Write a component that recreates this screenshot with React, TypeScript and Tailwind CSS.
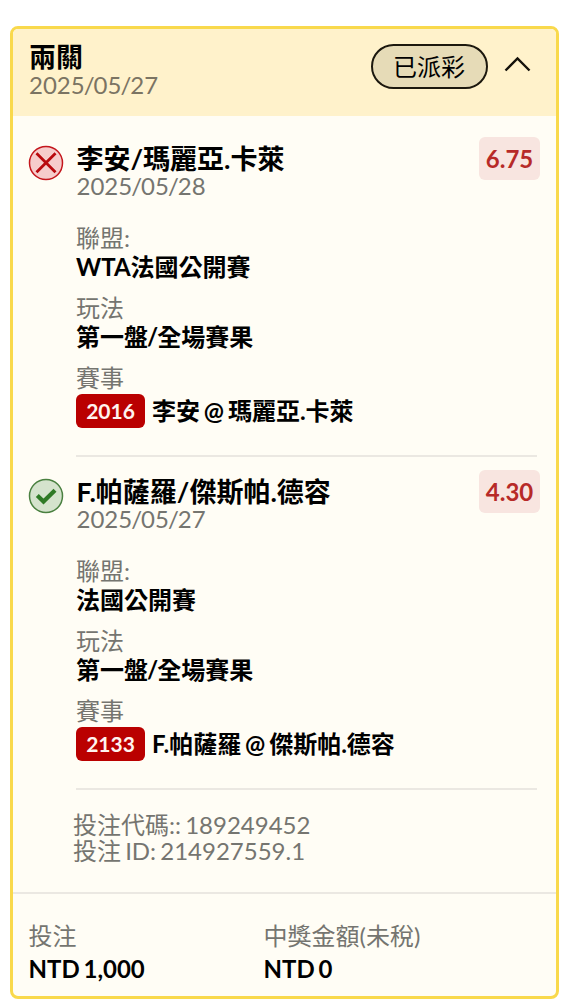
import React from 'react';

interface Leg {
    won: boolean;
    name: string;
    date: string;
    odds: string;
    league: string;
    market: string;
    code: string;
    match: string;
}

const LEGS: Leg[] = [
    {
        won: false,
        name: '李安/瑪麗亞.卡萊',
        date: '2025/05/28',
        odds: '6.75',
        league: 'WTA法國公開賽',
        market: '第一盤/全場賽果',
        code: '2016',
        match: '李安 @ 瑪麗亞.卡萊',
    },
    {
        won: true,
        name: 'F.帕薩羅/傑斯帕.德容',
        date: '2025/05/27',
        odds: '4.30',
        league: '法國公開賽',
        market: '第一盤/全場賽果',
        code: '2133',
        match: 'F.帕薩羅 @ 傑斯帕.德容',
    },
];

function StatusIcon({ won }: { won: boolean }) {
    return won ? (
        <svg className="size-[36px] shrink-0" viewBox="0 0 36 36" fill="none">
            <circle cx="18" cy="18" r="16.5" fill="#d5e3cd" stroke="#4a8040" strokeWidth="1.5" />
            <path d="M9.3 17.6l6.2 6L27 12.2" stroke="#2f7a26" strokeWidth="4.2" />
        </svg>
    ) : (
        <svg className="size-[36px] shrink-0" viewBox="0 0 36 36" fill="none">
            <circle cx="18" cy="18" r="16.5" fill="#f6cccb" stroke="#c4161c" strokeWidth="1.5" />
            <path d="M8.5 8.2l19 19M27.5 8.2l-19 19" stroke="#b90a0e" strokeWidth="2.8" />
        </svg>
    );
}

// Tightens the space around each slash
function Slashed({ text }: { text: string }) {
    return (
        <>
            {text.split('/').map((part, i) => (
                <React.Fragment key={i}>
                    {i > 0 && <span className="-mx-px">/</span>}
                    {part}
                </React.Fragment>
            ))}
        </>
    );
}

function Field({ label, value }: { label: string; value: string }) {
    return (
        <div className="mb-[14px]">
            <div className="mb-0.5 leading-[26px] text-[#757570]">{label}</div>
            <div className="font-bold leading-7">
                <Slashed text={value} />
            </div>
        </div>
    );
}

function LegRow({ leg }: { leg: Leg }) {
    return (
        <div className="flex h-[333px] pl-[14.5px] pt-[21px]">
            <StatusIcon won={leg.won} />
            <div className="ml-[12.5px] mr-[19px] flex-1 border-b-2 border-[#ebe8e2]">
                <div className="flex justify-between">
                    <div className="mb-[26px] pl-[0.5px]">
                        <div className="text-[27px] font-bold leading-7">{leg.name}</div>
                        <div className="leading-[26px] text-[#757570]">
                            <Slashed text={leg.date} />
                        </div>
                    </div>
                    <div className="-mr-[3px] -mt-2 flex h-[43px] w-[61px] items-center justify-center rounded-md bg-[#f8e5e0] font-bold text-[#b72a28]">
                        {leg.odds}
                    </div>
                </div>
                <Field label="聯盟:" value={leg.league} />
                <Field label="玩法" value={leg.market} />
                <div className="leading-[26px] text-[#757570]">賽事</div>
                <div className="mt-[3px] flex items-center">
                    <span className="mr-[7px] flex h-[34px] w-[69px] items-center justify-center rounded-md bg-[#ba0000] text-[21px] font-bold text-[#fff3ef]">
                        {leg.code}
                    </span>
                    <span className="font-bold leading-7 [word-spacing:-2px]">{leg.match}</span>
                </div>
            </div>
        </div>
    );
}

export default function App() {
    return (
        <div className="h-[1000px] bg-white pl-[10px] pt-[26px] font-[Lato,'Noto_Sans_CJK_TC',sans-serif] text-2xl text-black">
            <div className="flex h-[973px] w-[549px] flex-col overflow-hidden rounded-lg border-[3.5px] border-[#f9d94c] bg-[#fffdf5]">
                {/* Header */}
                <div className="flex h-[87px] shrink-0 items-start bg-[#fff2cb] pl-4 pt-[15px]">
                    <div className="-mt-px flex-1 leading-7">
                        <div className="text-[27px] font-bold">兩關</div>
                        <div className="text-[#7b7463]">
                            <Slashed text="2025/05/27" />
                        </div>
                    </div>
                    <div className="flex h-[45px] w-[117px] items-center justify-center rounded-full border-2 border-[#1c180e] bg-[#e6dbb7]">
                        已派彩
                    </div>
                    <svg className="ml-4 mr-[25.5px] mt-3 h-4 w-[27px]" viewBox="0 0 27 16" fill="none">
                        <path d="M1.5 14.5l12-12 12 12" stroke="#15120b" strokeWidth="2.4" />
                    </svg>
                </div>

                <div className="mt-2">
                    {LEGS.map((leg) => (
                        <LegRow key={leg.code} leg={leg} />
                    ))}
                </div>

                <div className="h-[104px] shrink-0 border-b-2 border-[#ebe8e2] pl-[60px] pt-[22px] leading-[26px] text-[#757570] [word-spacing:-2px]">
                    <div>投注代碼:: 189249452</div>
                    <div>投注 ID: 214927559.1</div>
                </div>

                {/* Totals */}
                <div className="flex pl-[15.5px] pt-[26px] leading-8 [word-spacing:-2px]">
                    <div className="w-[235px]">
                        <div className="text-[#757570]">投注</div>
                        <div className="mt-px font-bold">NTD 1,000</div>
                    </div>
                    <div>
                        <div className="text-[#757570]">中獎金額(未稅)</div>
                        <div className="mt-px font-bold">NTD 0</div>
                    </div>
                </div>
            </div>
        </div>
    );
}
